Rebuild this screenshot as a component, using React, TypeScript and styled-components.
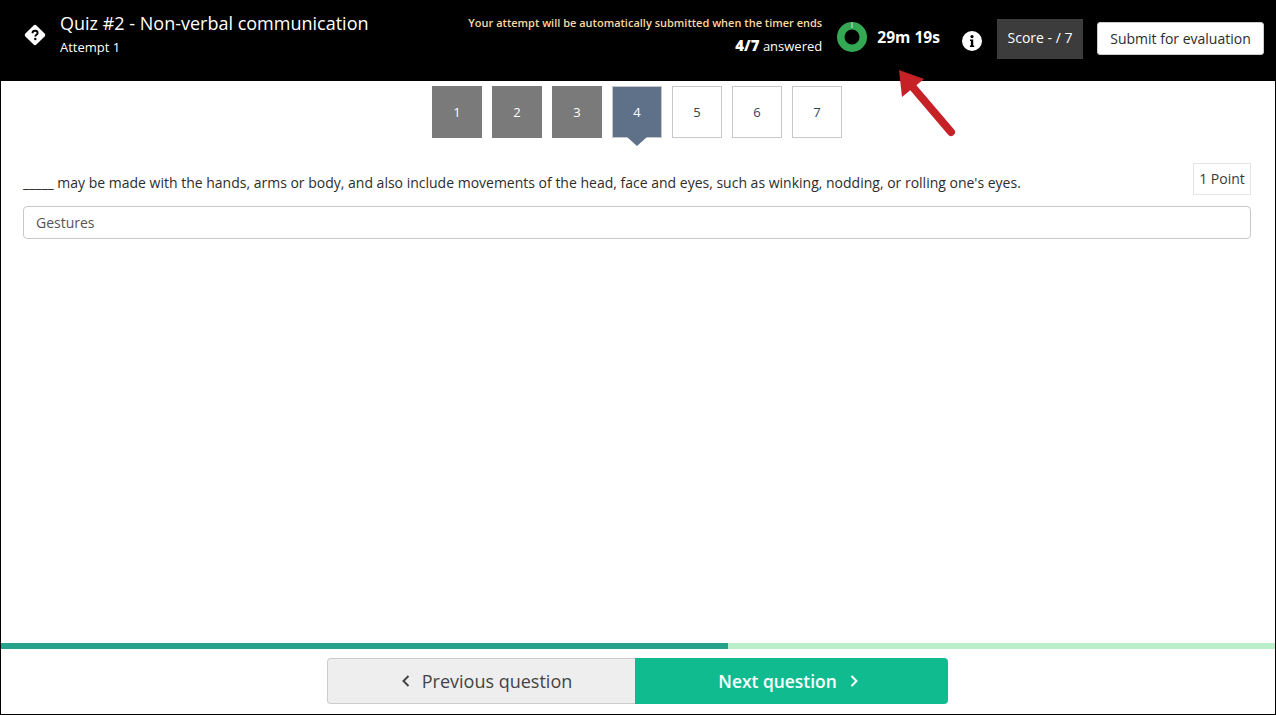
import React from "react";
import styled, { createGlobalStyle } from "styled-components";

const GlobalStyle = createGlobalStyle`
  html, body {
    margin: 0;
    padding: 0;
    height: 100%;
    background: #fff;
  }
  body {
    font-family: "Open Sans", "Liberation Sans", sans-serif;
    color: #2d2d2d;
  }
`;

const questions = [
  { n: 1, state: "done" },
  { n: 2, state: "done" },
  { n: 3, state: "done" },
  { n: 4, state: "current" },
  { n: 5, state: "open" },
  { n: 6, state: "open" },
  { n: 7, state: "open" },
] as const;

const App = () => {
  return (
    <Page>
      <GlobalStyle />
      <Header>
        <QuizIcon viewBox="0 0 24 24">
          <rect x="4.2" y="4.2" width="15.6" height="15.6" rx="2" transform="rotate(45 12 12)" fill="#fff" />
          <path d="M9.5 10.2c0-1.5 1.1-2.4 2.6-2.4s2.5.9 2.5 2.1c0 1.9-2.3 1.9-2.3 3.6" fill="none" stroke="#000" strokeWidth="1.9" />
          <circle cx="12.3" cy="16" r="1.2" fill="#000" />
        </QuizIcon>
        <TitleBlock>
          <QuizTitle>Quiz #2 - Non-verbal communication</QuizTitle>
          <AttemptLabel>Attempt 1</AttemptLabel>
        </TitleBlock>
        <StatusBlock>
          <TimerNotice>Your attempt will be automatically submitted when the timer ends</TimerNotice>
          <AnsweredLine>
            <strong>4/7</strong> answered
          </AnsweredLine>
        </StatusBlock>
        <TimerRing viewBox="0 0 30 30">
          <circle cx="15" cy="15" r="11.25" fill="none" stroke="#34a853" strokeWidth="7.5" />
          <rect x="14.5" y="0" width="1" height="6" fill="#d8d8d8" />
        </TimerRing>
        <TimerText>29m 19s</TimerText>
        <InfoIcon viewBox="0 0 20 20">
          <circle cx="10" cy="10" r="10" fill="#fff" />
          <circle cx="10" cy="5.6" r="1.6" fill="#000" />
          <path d="M8 8.6h3.2v6h1v1.3H7.9v-1.3h1v-4.7H8z" fill="#000" />
        </InfoIcon>
        <ScoreBox>Score - / 7</ScoreBox>
        <SubmitButton>Submit for evaluation</SubmitButton>
        <ArrowMark viewBox="0 0 60 70">
          <path d="M12 15L52 62" stroke="#c62127" strokeWidth="8" strokeLinecap="round" fill="none" />
          <path d="M0 0L25 9L3 27z" fill="#c62127" />
        </ArrowMark>
      </Header>

      <QuestionNav>
        {questions.map((q) => (
          <QuestionTab key={q.n} $state={q.state}>
            {q.n}
          </QuestionTab>
        ))}
      </QuestionNav>

      <QuestionBody>
        <QuestionRow>
          <QuestionText>
            _____ may be made with the hands, arms or body, and also include movements of the head, face and eyes, such as winking, nodding, or rolling one's eyes.
          </QuestionText>
          <PointBadge>1 Point</PointBadge>
        </QuestionRow>
        <AnswerInput readOnly value="Gestures" />
      </QuestionBody>

      <ProgressTrack>
        <ProgressFill style={{ width: `${(4 / 7) * 1274}px` }} />
      </ProgressTrack>

      <Footer>
        <PrevButton>
          <Chevron viewBox="0 0 10 14">
            <path d="M7.5 2L2.5 7l5 5" />
          </Chevron>
          Previous question
        </PrevButton>
        <NextButton>
          Next question
          <Chevron viewBox="0 0 10 14">
            <path d="M2.5 2l5 5-5 5" />
          </Chevron>
        </NextButton>
      </Footer>
    </Page>
  );
};

const Page = styled.div`
  display: flex;
  flex-direction: column;
  box-sizing: border-box;
  height: 715px;
  border: 1px solid #000;
  border-top: 0;
  overflow: hidden;
`;

const Header = styled.header`
  position: relative;
  display: flex;
  flex: none;
  align-items: flex-start;
  box-sizing: border-box;
  height: 81px;
  margin: 0 -1px;
  background: #000;
  color: #fff;
`;

const QuizIcon = styled.svg`
  flex: none;
  width: 24px;
  height: 24px;
  margin: 23px 13px 0 23px;
`;

const TitleBlock = styled.div`
  display: flex;
  flex-direction: column;
  padding-top: 10px;
`;

const QuizTitle = styled.div`
  font-size: 18px;
  line-height: 26px;
  white-space: nowrap;
`;

const AttemptLabel = styled.div`
  margin-top: 1px;
  font-size: 13px;
  line-height: 20px;
`;

const StatusBlock = styled.div`
  display: flex;
  flex-direction: column;
  align-items: flex-end;
  margin-left: auto;
  padding-top: 15px;
`;

const TimerNotice = styled.div`
  font-size: 11px;
  font-weight: 600;
  line-height: 16px;
  color: #f7d9a3;
  white-space: nowrap;
`;

const AnsweredLine = styled.div`
  margin-top: 6px;
  font-size: 13px;
  line-height: 16px;

  strong {
    font-size: 15px;
    font-weight: 800;
  }
`;

const TimerRing = styled.svg`
  flex: none;
  width: 30px;
  height: 30px;
  margin: 22px 0 0 15px;
`;

const TimerText = styled.div`
  margin: 26px 0 0 10px;
  font-size: 15.6px;
  font-weight: 700;
  line-height: 22px;
  white-space: nowrap;
`;

const InfoIcon = styled.svg`
  flex: none;
  width: 20px;
  height: 20px;
  margin: 31px 0 0 22px;
`;

const ScoreBox = styled.div`
  box-sizing: border-box;
  width: 86px;
  height: 40px;
  margin: 19px 0 0 15px;
  background: #3c3c3c;
  font-size: 14px;
  line-height: 38px;
  text-align: center;
`;

const SubmitButton = styled.button`
  box-sizing: border-box;
  width: 167px;
  height: 33px;
  margin: 22px 12px 0 14px;
  padding: 0;
  border: 1px solid #ccc;
  border-radius: 3px;
  background: #fff;
  color: #2d2d2d;
  font-family: inherit;
  font-size: 14px;
`;

const ArrowMark = styled.svg`
  position: absolute;
  top: 70px;
  left: 899px;
  width: 60px;
  height: 70px;
  overflow: visible;
`;

const tabBackground = { done: "#7a7a7a", current: "#5e7189", open: "#fff" };

const QuestionNav = styled.nav`
  display: flex;
  flex: none;
  justify-content: center;
  gap: 10px;
  padding: 5px 2px 0 0;
`;

const QuestionTab = styled.div<{ $state: "done" | "current" | "open" }>`
  position: relative;
  box-sizing: border-box;
  width: 50px;
  height: 52px;
  border: 1px solid ${({ $state }) => ($state === "done" ? "#7a7a7a" : "#c8c8c8")};
  background: ${({ $state }) => tabBackground[$state]};
  color: ${({ $state }) => ($state === "open" ? "#2f4358" : "#fff")};
  font-size: 13px;
  line-height: 50px;
  text-align: center;

  ${({ $state }) =>
    $state === "current" &&
    `
    &::after {
      content: "";
      position: absolute;
      top: 50px;
      left: 14px;
      border: 10px solid transparent;
      border-bottom: 0;
      border-top: 9px solid #5e7189;
    }
  `}
`;

const QuestionBody = styled.main`
  display: flex;
  flex: 1;
  flex-direction: column;
  padding: 25px 24px 0 22px;
`;

const QuestionRow = styled.div`
  display: flex;
  align-items: flex-start;
  justify-content: space-between;
`;

const QuestionText = styled.p`
  margin: 11px 0 0;
  font-size: 14px;
  line-height: 18px;
  color: #2d2d2d;
`;

const PointBadge = styled.div`
  box-sizing: border-box;
  width: 58px;
  height: 32px;
  border: 1px solid #e4e4e4;
  font-size: 14px;
  line-height: 30px;
  text-align: center;
  color: #3a3a3a;
`;

const AnswerInput = styled.input`
  box-sizing: border-box;
  width: 100%;
  height: 33px;
  margin-top: 11px;
  padding: 0 12px;
  border: 1px solid #c8c8c8;
  border-radius: 4px;
  outline: none;
  background: #fff;
  color: #555;
  font-family: inherit;
  font-size: 14px;
`;

const ProgressTrack = styled.div`
  flex: none;
  height: 6px;
  margin: 0 -1px;
  background: #b9f0c9;
`;

const ProgressFill = styled.div`
  height: 100%;
  background: #26a28c;
`;

const Footer = styled.footer`
  display: flex;
  flex: none;
  justify-content: center;
  height: 65px;
  padding: 9px 2px 0 0;
  box-sizing: border-box;
`;

const FooterButton = styled.button`
  display: flex;
  align-items: center;
  justify-content: center;
  box-sizing: border-box;
  height: 46px;
  font-family: inherit;
`;

const PrevButton = styled(FooterButton)`
  gap: 11px;
  width: 308px;
  padding: 0 0 0 11px;
  border: 1px solid #ccc;
  border-right: 0;
  border-radius: 4px 0 0 4px;
  background: #eee;
  color: #444;
  font-size: 18px;
`;

const NextButton = styled(FooterButton)`
  gap: 12px;
  width: 313px;
  padding: 0 5px 0 0;
  border: 0;
  border-radius: 0 4px 4px 0;
  background: #10bc8f;
  color: #fff;
  font-size: 17.4px;
  font-weight: 600;
`;

const Chevron = styled.svg`
  width: 10px;
  height: 14px;
  fill: none;
  stroke: currentColor;
  stroke-width: 2;
`;

export default App;
